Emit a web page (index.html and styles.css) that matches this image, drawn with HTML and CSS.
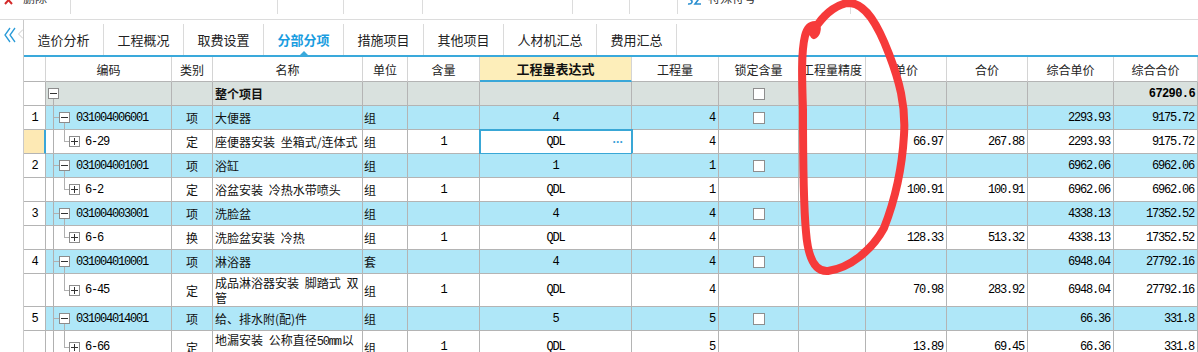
FILE: index.html
```html
<!DOCTYPE html>
<html lang="zh">
<head>
<meta charset="utf-8">
<title>分部分项</title>
<link rel="stylesheet" href="styles.css">
</head>
<body>
<div class="toolbar">
  <div class="tb-seg s1">
    <svg class="ico-x" width="9" height="10" viewBox="0 0 9 10"><path d="M1 1 L8 9 M8 1 L1 9" stroke="#d42a2a" stroke-width="2" fill="none"/></svg>
    <span class="tb-label">删除</span>
  </div>
  <div class="tb-seg s2"></div>
  <div class="tb-seg s3"></div>
  <div class="tb-seg s4"></div>
  <div class="tb-seg s5"></div>
  <div class="tb-seg s6"></div>
  <div class="tb-seg s7"></div>
  <div class="tb-seg s8">
    <svg class="ico-sym" width="15" height="12" viewBox="0 0 15 12"><path d="M6 1.5 C2 0.5 1 4 3.5 5.5 C6 7 5.5 10.5 1 10" stroke="#2a8fd0" stroke-width="1.6" fill="none"/><path d="M8 2 H14 L8 10 H14" stroke="#2a8fd0" stroke-width="1.6" fill="none"/></svg>
    <span class="tb-label sym">特殊符号</span>
  </div>
  <div class="tb-seg last"></div>
</div>

<div class="main">
  <div class="side">
    <svg width="13" height="16" viewBox="0 0 13 16"><path d="M6 1 L1 8 L6 15 M11 1 L6 8 L11 15" stroke="#2a9bd8" stroke-width="1.3" fill="none"/></svg>
    <svg class="notch" width="5" height="10" viewBox="0 0 5 10"><path d="M5 0.5 L0.5 5 L5 9.5" stroke="#c9c9c9" stroke-width="1" fill="none"/></svg>
  </div>
  <div class="content">
    <div class="tabs">
      <div class="tab">造价分析</div>
      <div class="tab">工程概况</div>
      <div class="tab">取费设置</div>
      <div class="tab active">分部分项</div>
      <div class="tab">措施项目</div>
      <div class="tab">其他项目</div>
      <div class="tab wide">人材机汇总</div>
      <div class="tab">费用汇总</div>
    </div>

    <div class="grid">
      <div class="row head">
        <div class="c"></div>
        <div class="c">编码</div>
        <div class="c">类别</div>
        <div class="c">名称</div>
        <div class="c">单位</div>
        <div class="c">含量</div>
        <div class="c hl">工程量表达式</div>
        <div class="c">工程量</div>
        <div class="c">锁定含量</div>
        <div class="c">工程量精度</div>
        <div class="c">单价</div>
        <div class="c">合价</div>
        <div class="c">综合单价</div>
        <div class="c">综合合价</div>
      </div>

      <div class="row gray">
        <div class="c rn"></div>
        <div class="c code t-root"><i class="tbx"></i></div>
        <div class="c"></div>
        <div class="c nm b">整个项目</div>
        <div class="c"></div>
        <div class="c"></div>
        <div class="c"></div>
        <div class="c"></div>
        <div class="c ctr"><i class="cb"></i></div>
        <div class="c"></div>
        <div class="c"></div>
        <div class="c"></div>
        <div class="c"></div>
        <div class="c r n nb">67290.6</div>
      </div>

      <div class="row blue">
        <div class="c rn n">1</div>
        <div class="c code t-par"><i class="tbx"></i><span class="n lbl">031004006001</span></div>
        <div class="c ctr">项</div>
        <div class="c nm">大便器</div>
        <div class="c un">组</div>
        <div class="c"></div>
        <div class="c ctr n">4</div>
        <div class="c r n">4</div>
        <div class="c ctr"><i class="cb"></i></div>
        <div class="c"></div>
        <div class="c"></div>
        <div class="c"></div>
        <div class="c r n">2293.93</div>
        <div class="c r n">9175.72</div>
      </div>
      <div class="row">
        <div class="c rn sel"></div>
        <div class="c code t-chi"><i class="tbx plus"></i><span class="n lbl">6-29</span></div>
        <div class="c ctr">定</div>
        <div class="c nm">座便器安装 坐箱式/连体式</div>
        <div class="c un">组</div>
        <div class="c ctr n">1</div>
        <div class="c expr-sel"><span></span><span class="n">QDL</span><span class="dots">···</span></div>
        <div class="c r n">4</div>
        <div class="c"></div>
        <div class="c"></div>
        <div class="c r n">66.97</div>
        <div class="c r n">267.88</div>
        <div class="c r n">2293.93</div>
        <div class="c r n">9175.72</div>
      </div>

      <div class="row blue">
        <div class="c rn n">2</div>
        <div class="c code t-par"><i class="tbx"></i><span class="n lbl">031004001001</span></div>
        <div class="c ctr">项</div>
        <div class="c nm">浴缸</div>
        <div class="c un">组</div>
        <div class="c"></div>
        <div class="c ctr n">1</div>
        <div class="c r n">1</div>
        <div class="c ctr"><i class="cb"></i></div>
        <div class="c"></div>
        <div class="c"></div>
        <div class="c"></div>
        <div class="c r n">6962.06</div>
        <div class="c r n">6962.06</div>
      </div>
      <div class="row">
        <div class="c rn"></div>
        <div class="c code t-chi"><i class="tbx plus"></i><span class="n lbl">6-2</span></div>
        <div class="c ctr">定</div>
        <div class="c nm">浴盆安装 冷热水带喷头</div>
        <div class="c un">组</div>
        <div class="c ctr n">1</div>
        <div class="c ctr n">QDL</div>
        <div class="c r n">1</div>
        <div class="c"></div>
        <div class="c"></div>
        <div class="c r n">100.91</div>
        <div class="c r n">100.91</div>
        <div class="c r n">6962.06</div>
        <div class="c r n">6962.06</div>
      </div>

      <div class="row blue">
        <div class="c rn n">3</div>
        <div class="c code t-par"><i class="tbx"></i><span class="n lbl">031004003001</span></div>
        <div class="c ctr">项</div>
        <div class="c nm">洗脸盆</div>
        <div class="c un">组</div>
        <div class="c"></div>
        <div class="c ctr n">4</div>
        <div class="c r n">4</div>
        <div class="c ctr"><i class="cb"></i></div>
        <div class="c"></div>
        <div class="c"></div>
        <div class="c"></div>
        <div class="c r n">4338.13</div>
        <div class="c r n">17352.52</div>
      </div>
      <div class="row">
        <div class="c rn"></div>
        <div class="c code t-chi"><i class="tbx plus"></i><span class="n lbl">6-6</span></div>
        <div class="c ctr">换</div>
        <div class="c nm">洗脸盆安装 冷热</div>
        <div class="c un">组</div>
        <div class="c ctr n">1</div>
        <div class="c ctr n">QDL</div>
        <div class="c r n">4</div>
        <div class="c"></div>
        <div class="c"></div>
        <div class="c r n">128.33</div>
        <div class="c r n">513.32</div>
        <div class="c r n">4338.13</div>
        <div class="c r n">17352.52</div>
      </div>

      <div class="row blue">
        <div class="c rn n">4</div>
        <div class="c code t-par"><i class="tbx"></i><span class="n lbl">031004010001</span></div>
        <div class="c ctr">项</div>
        <div class="c nm">淋浴器</div>
        <div class="c un">套</div>
        <div class="c"></div>
        <div class="c ctr n">4</div>
        <div class="c r n">4</div>
        <div class="c ctr"><i class="cb"></i></div>
        <div class="c"></div>
        <div class="c"></div>
        <div class="c"></div>
        <div class="c r n">6948.04</div>
        <div class="c r n">27792.16</div>
      </div>
      <div class="row tall">
        <div class="c rn"></div>
        <div class="c code t-chi"><i class="tbx plus"></i><span class="n lbl">6-45</span></div>
        <div class="c ctr">定</div>
        <div class="c nm wrap">成品淋浴器安装 脚踏式 双<br>管</div>
        <div class="c un">组</div>
        <div class="c ctr n">1</div>
        <div class="c ctr n">QDL</div>
        <div class="c r n">4</div>
        <div class="c"></div>
        <div class="c"></div>
        <div class="c r n">70.98</div>
        <div class="c r n">283.92</div>
        <div class="c r n">6948.04</div>
        <div class="c r n">27792.16</div>
      </div>

      <div class="row blue">
        <div class="c rn n">5</div>
        <div class="c code t-par"><i class="tbx"></i><span class="n lbl">031004014001</span></div>
        <div class="c ctr">项</div>
        <div class="c nm">给、排水附(配)件</div>
        <div class="c un">组</div>
        <div class="c"></div>
        <div class="c ctr n">5</div>
        <div class="c r n">5</div>
        <div class="c ctr"><i class="cb"></i></div>
        <div class="c"></div>
        <div class="c"></div>
        <div class="c"></div>
        <div class="c r n">66.36</div>
        <div class="c r n">331.8</div>
      </div>
      <div class="row tall">
        <div class="c rn"></div>
        <div class="c code t-chi"><i class="tbx plus"></i><span class="n lbl">6-66</span></div>
        <div class="c ctr">定</div>
        <div class="c nm wrap">地漏安装 公称直径<span class="mm">50mm</span>以<br>内</div>
        <div class="c un">组</div>
        <div class="c ctr n">1</div>
        <div class="c ctr n">QDL</div>
        <div class="c r n">5</div>
        <div class="c"></div>
        <div class="c"></div>
        <div class="c r n">13.89</div>
        <div class="c r n">69.45</div>
        <div class="c r n">66.36</div>
        <div class="c r n">331.8</div>
      </div>
    </div>
  </div>
</div>

<svg class="scribble" width="1198" height="352" viewBox="0 0 1198 352">
  <path d="M806 232 C803 200 803 150 803 110 C802 80 801 52 805 36 C807 28 811 25 815 25 C818 26 817 33 814 35 C812 33 813 28 818 24 C826 13 838 3 850 3 C866 4 878 25 889 54 C899 80 906 105 904 135 C902 170 895 200 884 228 C872 250 850 268 828 271 C815 272 808 258 806 232 Z" fill="none" stroke="#f63a3a" stroke-width="8" stroke-linecap="round" stroke-linejoin="round"/>
</svg>
</body>
</html>
```

FILE: styles.css
```css
* { box-sizing: border-box; }

body {
  margin: 0;
  width: 1198px;
  height: 352px;
  overflow: hidden;
  position: relative;
  background: #fff;
  color: #111;
  font-family: "Noto Sans CJK SC", "Noto Sans", sans-serif;
  font-size: 12px;
}

/* ---------- top toolbar (scrolled, mostly hidden) ---------- */
.toolbar {
  height: 20px;
  display: flex;
  border-bottom: 1px solid #dcdcdc;
  overflow: hidden;
}
.tb-seg {
  flex: none;
  height: 14px;
  border-right: 1px solid #dcdcdc;
  display: flex;
  align-items: flex-start;
}
.tb-seg.last { flex: 1; border-right: none; }
.s1 { width: 71px; padding-left: 4px; }
.s2 { width: 207px; }
.s3 { width: 66px; }
.s4 { width: 79px; }
.s5 { width: 150px; }
.s6 { width: 57px; }
.s7 { width: 48px; }
.s8 { width: 173px; padding-left: 9px; }
.ico-x { margin-top: -5px; flex: none; }
.ico-sym { margin-top: -6px; flex: none; }
.tb-label {
  margin-top: -8px;
  margin-left: 10px;
  line-height: 12px;
  font-size: 12px;
  color: #333;
}
.tb-label.sym { margin-left: 6px; }

/* ---------- main ---------- */
.main {
  display: flex;
  height: 332px;
}
.side {
  flex: none;
  width: 24px;
  border-right: 1px solid #c9c9c9;
  display: flex;
  align-items: flex-start;
  padding-top: 7px;
  padding-left: 4px;
}
.notch { margin-top: 2px; margin-left: 1px; }
.content {
  flex: 1;
  min-width: 0;
}

/* ---------- tabs ---------- */
.tabs {
  height: 37px;
  padding-top: 4px;
  display: flex;
  border-bottom: 2px solid #3aa9db;
}
.tab {
  position: relative;
  flex: none;
  width: 80px;
  border-right: 1px solid #dadada;
  display: flex;
  align-items: center;
  justify-content: center;
  font-size: 13px;
  color: #222;
}
.tab.wide { width: 93px; }
.tab.active { color: #1a9de0; font-weight: bold; }
.tab.active::after {
  content: "";
  position: absolute;
  left: 50%;
  bottom: 0;
  margin-left: -4px;
  border-left: 4px solid transparent;
  border-right: 4px solid transparent;
  border-bottom: 4px solid #3aa9db;
}

/* ---------- grid ---------- */
.row {
  display: grid;
  grid-template-columns: 22px 126px 41px 150px 45px 72px 152px 87px 80px 67px 81px 81px 86px 84px;
  height: 24px;
}
.row.tall { height: 33px; }
.c {
  display: flex;
  align-items: center;
  overflow: hidden;
  white-space: nowrap;
  border-right: 1px solid #b4b4b4;
  border-bottom: 1px solid #b4b4b4;
}
.row.head { height: 25px; }
.head .c {
  justify-content: center;
  border-right-color: #d4d4d4;
  color: #222;
}
.head .hl {
  background: #fdeeba;
  border-bottom: 2px solid #3aa7d8;
  font-weight: bold;
  font-size: 13px;
  color: #111;
}

.gray .c:not(.rn) { background-color: #d9e1de; }
.blue .c:not(.rn) { background-color: #afe7f8; }

.rn { justify-content: center; }
.rn.sel { background: #fde9b4; border-right: 2px solid #3aa6d8; }
.ctr { justify-content: center; }
.r { justify-content: flex-end; padding-right: 3px; }
.nm { padding-left: 2px; word-spacing: 3px; }
.un { padding-left: 1px; }
.b { font-weight: bold; }
.wrap { display: block; white-space: nowrap; line-height: 15px; padding-top: 1px; }
.mm {
  font-family: "Liberation Mono", monospace;
  font-size: 12px;
  letter-spacing: -1.2px;
  margin-right: 1px;
}

.n {
  font-family: "Liberation Mono", monospace;
  font-size: 12px;
  letter-spacing: -1.2px;
  color: #000;
}
.nb { font-weight: bold; letter-spacing: -0.6px; padding-right: 2px; }

/* tree column */
.code { background-repeat: no-repeat; }
.t-root {
  padding-left: 2px;
  background-image: linear-gradient(#b0b0b0, #b0b0b0);
  background-size: 1px 50%;
  background-position: 7px 100%;
}
.t-par {
  padding-left: 13px;
  background-image:
    linear-gradient(#b0b0b0, #b0b0b0),
    linear-gradient(#b0b0b0, #b0b0b0),
    linear-gradient(#b0b0b0, #b0b0b0);
  background-size: 1px 100%, 6px 1px, 1px 50%;
  background-position: 7px 0, 7px 50%, 18px 100%;
}
.t-chi {
  padding-left: 23px;
  background-image:
    linear-gradient(#b0b0b0, #b0b0b0),
    linear-gradient(#b0b0b0, #b0b0b0),
    linear-gradient(#b0b0b0, #b0b0b0);
  background-size: 1px 100%, 1px 50%, 5px 1px;
  background-position: 7px 0, 18px 0, 18px 50%;
}
.tbx {
  flex: none;
  width: 11px;
  height: 11px;
  border: 1px solid #8c8c8c;
  background: linear-gradient(#333, #333) center / 7px 1px no-repeat, #fff;
}
.tbx.plus {
  background:
    linear-gradient(#333, #333) center / 7px 1px no-repeat,
    linear-gradient(#333, #333) center / 1px 7px no-repeat,
    #fff;
}
.t-par .lbl { margin-left: 6px; }
.t-chi .lbl { margin-left: 5px; }

.cb {
  width: 12px;
  height: 12px;
  border: 1px solid #8e8e8e;
  background: #fff;
}

.expr-sel {
  display: grid;
  grid-template-columns: 1fr auto 1fr;
  align-items: center;
  justify-items: center;
  outline: 2px solid #39a7d6;
  outline-offset: -1px;
  background: #fff;
}
.dots {
  justify-self: end;
  padding-right: 8px;
  color: #3a9fd8;
  font-family: "Liberation Sans", sans-serif;
  font-weight: bold;
  font-size: 12px;
  letter-spacing: -0.5px;
}

/* hand-drawn annotation */
.scribble {
  position: absolute;
  left: 0;
  top: 0;
  pointer-events: none;
}
```
